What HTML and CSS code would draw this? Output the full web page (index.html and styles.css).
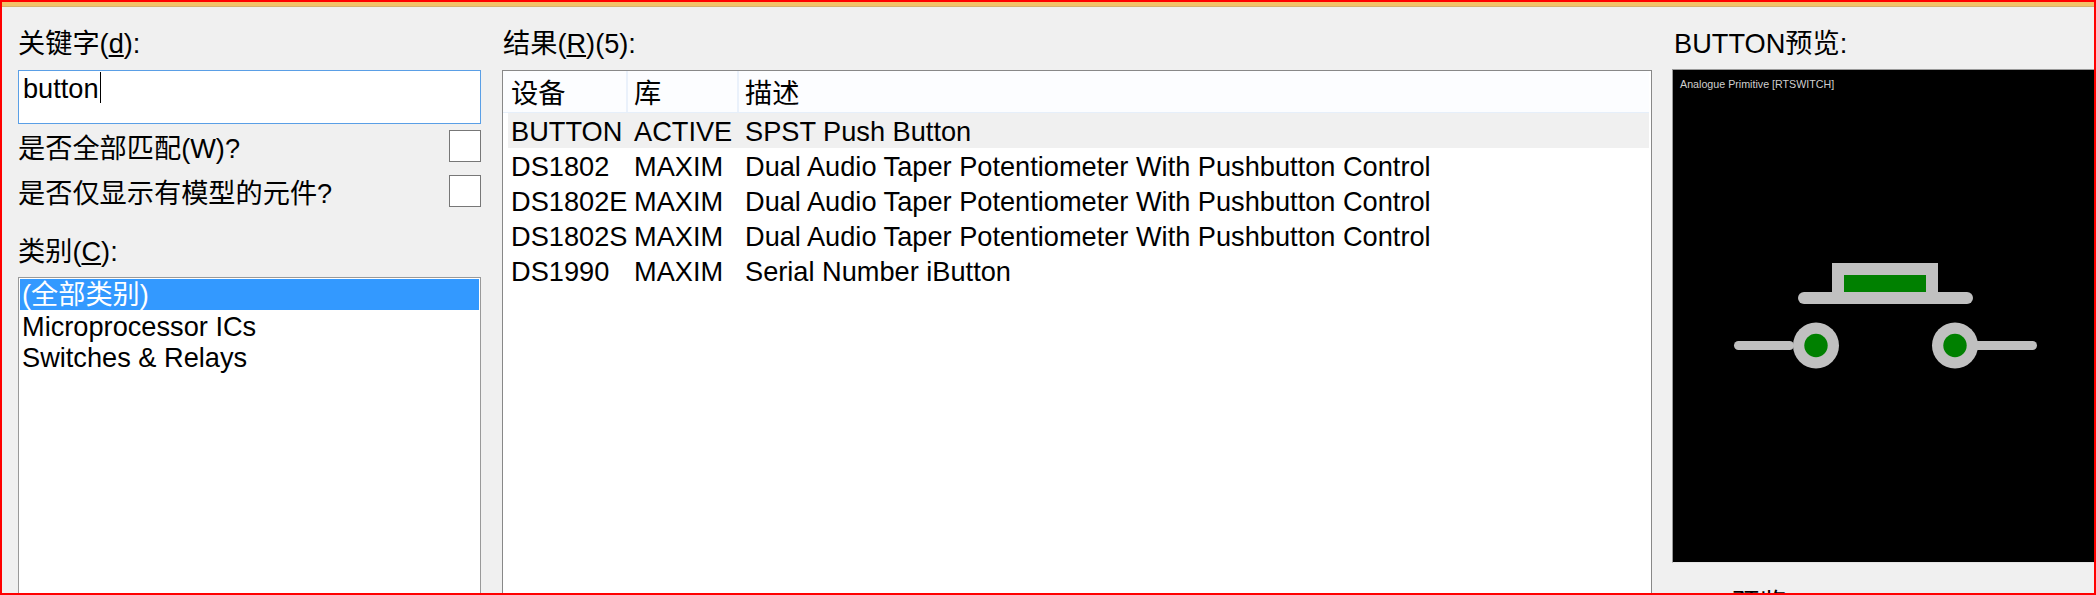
FILE: index.html
```html
<!DOCTYPE html>
<html lang="zh-CN">
<head>
    <meta charset="UTF-8">
    <title>Pick Devices</title>
    <link rel="stylesheet" href="styles.css">
</head>
<body>
    <div class="window">
        <div class="title-strip"></div>
        <div class="panes">
            <!-- Filters -->
            <div class="pane-left">
                <div class="label">关键字(<u>d</u>):</div>
                <div class="keyword-box"><span class="keyword-text">button</span></div>
                <div class="option first">
                    <span>是否全部匹配(W)?</span>
                    <span class="check"></span>
                </div>
                <div class="option second">
                    <span>是否仅显示有模型的元件?</span>
                    <span class="check"></span>
                </div>
                <div class="label category-label">类别(<u>C</u>):</div>
                <div class="list-box">
                    <div class="list-item selected">(全部类别)</div>
                    <div class="list-item">Microprocessor ICs</div>
                    <div class="list-item">Switches &amp; Relays</div>
                </div>
            </div>

            <!-- Results -->
            <div class="pane-middle">
                <div class="label results-label">结果(<u>R</u>)(5):</div>
                <div class="results">
                    <div class="results-head">
                        <div class="col-device">设备</div>
                        <div class="col-lib">库</div>
                        <div class="col-desc">描述</div>
                    </div>
                    <div class="results-row current">
                        <div class="col-device">BUTTON</div>
                        <div class="col-lib">ACTIVE</div>
                        <div class="col-desc">SPST Push Button</div>
                    </div>
                    <div class="results-row">
                        <div class="col-device">DS1802</div>
                        <div class="col-lib">MAXIM</div>
                        <div class="col-desc">Dual Audio Taper Potentiometer With Pushbutton Control</div>
                    </div>
                    <div class="results-row">
                        <div class="col-device">DS1802E</div>
                        <div class="col-lib">MAXIM</div>
                        <div class="col-desc">Dual Audio Taper Potentiometer With Pushbutton Control</div>
                    </div>
                    <div class="results-row">
                        <div class="col-device">DS1802S</div>
                        <div class="col-lib">MAXIM</div>
                        <div class="col-desc">Dual Audio Taper Potentiometer With Pushbutton Control</div>
                    </div>
                    <div class="results-row">
                        <div class="col-device">DS1990</div>
                        <div class="col-lib">MAXIM</div>
                        <div class="col-desc">Serial Number iButton</div>
                    </div>
                </div>
            </div>

            <!-- Preview -->
            <div class="pane-right">
                <div class="label preview-label">BUTTON预览:</div>
                <div class="preview">
                    <div class="preview-caption">Analogue Primitive [RTSWITCH]</div>
                    <svg class="preview-art" viewBox="0 0 421 462">
                        <rect x="61" y="241" width="60" height="9" rx="4.5" fill="#c0c0c0"/>
                        <rect x="300" y="241" width="64" height="9" rx="4.5" fill="#c0c0c0"/>
                        <rect x="159" y="163" width="106" height="35" fill="#c0c0c0"/>
                        <rect x="171" y="175" width="82" height="17" fill="#008000"/>
                        <rect x="125" y="192" width="175" height="12" rx="6" fill="#c0c0c0"/>
                        <circle cx="143" cy="245.500" r="23" fill="#c0c0c0"/>
                        <circle cx="143" cy="245.500" r="11.700" fill="#008000"/>
                        <circle cx="282" cy="245.500" r="23" fill="#c0c0c0"/>
                        <circle cx="282" cy="245.500" r="11.700" fill="#008000"/>
                    </svg>
                </div>
                <div class="preview-foot">预览:</div>
            </div>
        </div>
    </div>
</body>
</html>
```

FILE: styles.css
```css
html, body {
    margin: 0;
    padding: 0;
}
body {
    font-family: "Liberation Sans", "Noto Sans CJK SC", sans-serif;
    font-size: 27.2px;
    color: #000;
    background-color: #f0f0f0;
}
.window {
    box-sizing: border-box;
    width: 2096px;
    height: 595px;
    border: 2px solid #ff0000;
    overflow: hidden;
    background-color: #f0f0f0;
}
.title-strip {
    height: 4px;
    background-color: #f3c268;
    border-bottom: 1px solid #d9b26a;
}
.panes {
    display: flex;
    padding-left: 16px;
}
.label {
    height: 32px;
    line-height: 32px;
    margin-top: 21px;
    white-space: nowrap;
}
.pane-left {
    width: 463px;
    margin-right: 21px;
}
.pane-middle {
    width: 1150px;
    margin-right: 20px;
}
.pane-right {
    flex: 1;
}

/* left column */
.keyword-box {
    box-sizing: border-box;
    height: 54px;
    margin-top: 10px;
    padding: 1px 4px;
    border: 1px solid #5a9fe6;
    background-color: #fff;
}
.keyword-text {
    display: inline-block;
    height: 31px;
    line-height: 33px;
    padding-right: 1px;
    border-right: 1px solid #000;
    vertical-align: top;
}
.option {
    display: flex;
    justify-content: space-between;
    align-items: center;
    height: 32px;
    white-space: nowrap;
}
.option.first {
    margin-top: 6px;
}
.option.second {
    margin-top: 13px;
}
.check {
    box-sizing: border-box;
    width: 32px;
    height: 32px;
    border: 1px solid #777;
    background-color: #fff;
}
.category-label {
    margin-top: 29px;
}
.list-box {
    height: 400px;
    margin-top: 9px;
    padding: 1px;
    border: 1px solid #999;
    background-color: #fff;
}
.list-item {
    height: 31px;
    line-height: 33px;
    padding-left: 2px;
    white-space: nowrap;
}
.list-item.selected {
    line-height: 31px;
    background-color: #3399ff;
    color: #fff;
}

/* results table */
.results-label {
    padding-left: 1px;
}
.results {
    box-sizing: border-box;
    height: 600px;
    margin-top: 10px;
    padding-right: 2px;
    border: 1px solid #888;
    background-color: #fff;
}
.results-head {
    display: flex;
    height: 41px;
    line-height: 45px;
    border-bottom: 1px solid #e6effa;
    background-color: #fcfdff;
}
.results-head > div {
    border-right: 2px solid #eaf1fb;
}
.results-head .col-desc {
    border-right: none;
}
.results-row {
    display: flex;
    height: 35px;
    line-height: 37px;
    white-space: nowrap;
}
.results-row.current {
    background: linear-gradient(to right, #fff 5px, #f0f0f0 5px);
}
.col-device {
    box-sizing: border-box;
    width: 125px;
    padding-left: 8px;
}
.col-lib {
    box-sizing: border-box;
    width: 111px;
    padding-left: 6px;
}
.col-desc {
    flex: 1;
    padding-left: 6px;
}

/* preview */
.preview-label {
    padding-left: 2px;
}
.preview {
    height: 492px;
    margin-top: 9px;
    border-top: 1px solid #999;
    border-left: 1px solid #999;
    border-bottom: 1px solid #e4e4e4;
    background-color: #000;
    overflow: hidden;
}
.preview-caption {
    height: 30px;
    padding: 7px 0 0 7px;
    box-sizing: border-box;
    font-size: 10.7px;
    line-height: 14px;
    color: #cfcfcf;
    white-space: nowrap;
}
.preview-art {
    display: block;
    width: 421px;
    height: 462px;
}
.preview-foot {
    margin-top: 25px;
    padding-left: 60px;
    line-height: 32px;
    height: 32px;
}
```
